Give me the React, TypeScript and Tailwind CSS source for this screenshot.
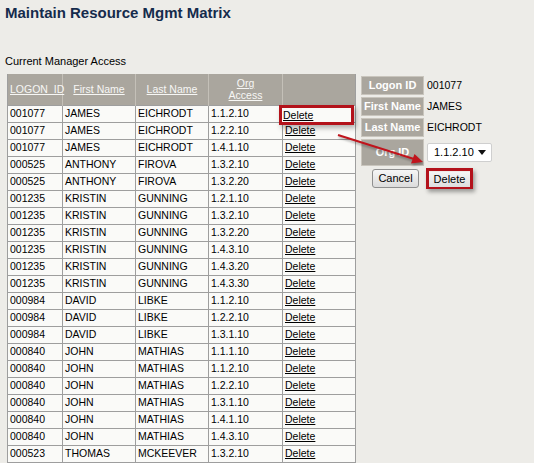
import React from "react";

type Row = [string, string, string, string];

const rows: Row[] = [
  ["001077", "JAMES", "EICHRODT", "1.1.2.10"],
  ["001077", "JAMES", "EICHRODT", "1.2.2.10"],
  ["001077", "JAMES", "EICHRODT", "1.4.1.10"],
  ["000525", "ANTHONY", "FIROVA", "1.3.2.10"],
  ["000525", "ANTHONY", "FIROVA", "1.3.2.20"],
  ["001235", "KRISTIN", "GUNNING", "1.2.1.10"],
  ["001235", "KRISTIN", "GUNNING", "1.3.2.10"],
  ["001235", "KRISTIN", "GUNNING", "1.3.2.20"],
  ["001235", "KRISTIN", "GUNNING", "1.4.3.10"],
  ["001235", "KRISTIN", "GUNNING", "1.4.3.20"],
  ["001235", "KRISTIN", "GUNNING", "1.4.3.30"],
  ["000984", "DAVID", "LIBKE", "1.1.2.10"],
  ["000984", "DAVID", "LIBKE", "1.2.2.10"],
  ["000984", "DAVID", "LIBKE", "1.3.1.10"],
  ["000840", "JOHN", "MATHIAS", "1.1.1.10"],
  ["000840", "JOHN", "MATHIAS", "1.1.2.10"],
  ["000840", "JOHN", "MATHIAS", "1.2.2.10"],
  ["000840", "JOHN", "MATHIAS", "1.3.1.10"],
  ["000840", "JOHN", "MATHIAS", "1.4.1.10"],
  ["000840", "JOHN", "MATHIAS", "1.4.3.10"],
  ["000523", "THOMAS", "MCKEEVER", "1.3.2.10"],
];

const headCell =
  "border-x border-[#c4c0b8] px-[2px] text-center align-middle font-normal text-[#f7f7f5]";
const bodyCell =
  "h-[17px] border border-[#9e9e9e] px-[2px] py-0 text-left align-middle leading-[15px]";

function Label({ text }: { text: string }) {
  return (
    <div className="flex h-full w-[63px] items-center justify-center border border-[#c9c5bd] bg-[#aaa69e] text-[11px] font-bold text-white">
      {text}
    </div>
  );
}

export default function App() {
  return (
    <div className="relative min-h-[463px] w-[534px] overflow-hidden bg-[#edece8] font-['Liberation_Sans',Arial,sans-serif] text-black">
      <h1 className="pl-[5px] pt-[4px] text-[15px] font-bold leading-[18px] text-[#152b4c]">
        Maintain Resource Mgmt Matrix
      </h1>
      <p className="ml-[5px] mt-[33px] text-[11px] leading-[13px]">Current Manager Access</p>

      <div className="mt-[6px] flex items-start">
        <table className="ml-[7px] w-[348px] table-fixed border-collapse text-[10.5px]">
          <colgroup>
            <col className="w-[55px]" />
            <col className="w-[73px]" />
            <col className="w-[73px]" />
            <col className="w-[74px]" />
            <col className="w-[73px]" />
          </colgroup>
          <thead>
            <tr className="h-[31px] bg-[#aaa69e] leading-[12px]">
              <th className={`${headCell} border-l-[#9e9e9e] text-left`}>
                <span className="underline">LOGON_ID</span>
              </th>
              <th className={headCell}>
                <span className="underline">First Name</span>
              </th>
              <th className={headCell}>
                <span className="underline">Last Name</span>
              </th>
              <th className={headCell}>
                <span className="underline">Org</span>
                <br />
                <span className="underline">Access</span>
              </th>
              <th className={`${headCell} border-r-[#9e9e9e]`}></th>
            </tr>
          </thead>
          <tbody className="bg-[#fafaf8]">
            {rows.map((r, i) => (
              <tr key={i}>
                <td className={bodyCell}>{r[0]}</td>
                <td className={bodyCell}>{r[1]}</td>
                <td className={bodyCell}>{r[2]}</td>
                <td className={bodyCell}>{r[3]}</td>
                {i === 0 ? (
                  <td className={`${bodyCell} relative`}>
                    {/* callout box around the first Delete link */}
                    <div className="absolute left-[-4px] top-[-1px] z-10 h-[20px] w-[75px] border-[3px] border-[#b3121b] bg-[#fafaf8] pl-[1px] leading-[14px] shadow-[2px_3px_5px_rgba(0,0,0,0.3)]">
                      <span className="underline">Delete</span>
                    </div>
                  </td>
                ) : (
                  <td className={bodyCell}>
                    <span className="underline">Delete</span>
                  </td>
                )}
              </tr>
            ))}
          </tbody>
        </table>

        <div className="ml-[5px] mt-[2px] flex flex-col">
          <div className="grid grid-cols-[63px_auto] grid-rows-[19px_19px_19px_27px] gap-x-[3px] gap-y-[2px] text-[10.5px]">
            <Label text="Logon ID" />
            <div className="flex items-center">001077</div>
            <Label text="First Name" />
            <div className="flex items-center">JAMES</div>
            <Label text="Last Name" />
            <div className="flex items-center">EICHRODT</div>
            <Label text="Org ID" />
            <div className="flex items-center">
              <div className="flex h-[19px] w-[65px] items-center justify-between rounded-[2px] border border-[#cfcfcf] bg-white pl-[6px] pr-[5px] text-[11px]">
                <span>1.1.2.10</span>
                <svg width="8" height="5" viewBox="0 0 8 5">
                  <path d="M0 0h8L4 5z" fill="#111" />
                </svg>
              </div>
            </div>
          </div>
          <div className="ml-[11px] mt-[2px] flex items-center gap-[7px] text-[11px]">
            <button className="h-[19px] w-[47px] rounded-[3px] border border-[#8f8f8f] bg-gradient-to-b from-[#f6f6f6] to-[#dcdcdc] leading-[17px]">
              Cancel
            </button>
            <div className="h-[21px] w-[47px] border-[3px] border-[#b3121b] shadow-[2px_3px_4px_rgba(0,0,0,0.35)]">
              <button className="h-full w-full bg-gradient-to-b from-[#f4f4f4] to-[#dedede] leading-[14px]">
                Delete
              </button>
            </div>
          </div>
        </div>
      </div>

      {/* arrow from the link to the panel */}
      <svg
        className="pointer-events-none absolute left-0 top-0 drop-shadow-[1px_2px_1px_rgba(0,0,0,0.3)]"
        width="534"
        height="463"
      >
        <line x1="338" y1="135" x2="414" y2="159" stroke="#c0141c" strokeWidth="2" />
        <polygon points="423,162 411,163.5 414.5,154" fill="#c0141c" />
      </svg>
    </div>
  );
}
